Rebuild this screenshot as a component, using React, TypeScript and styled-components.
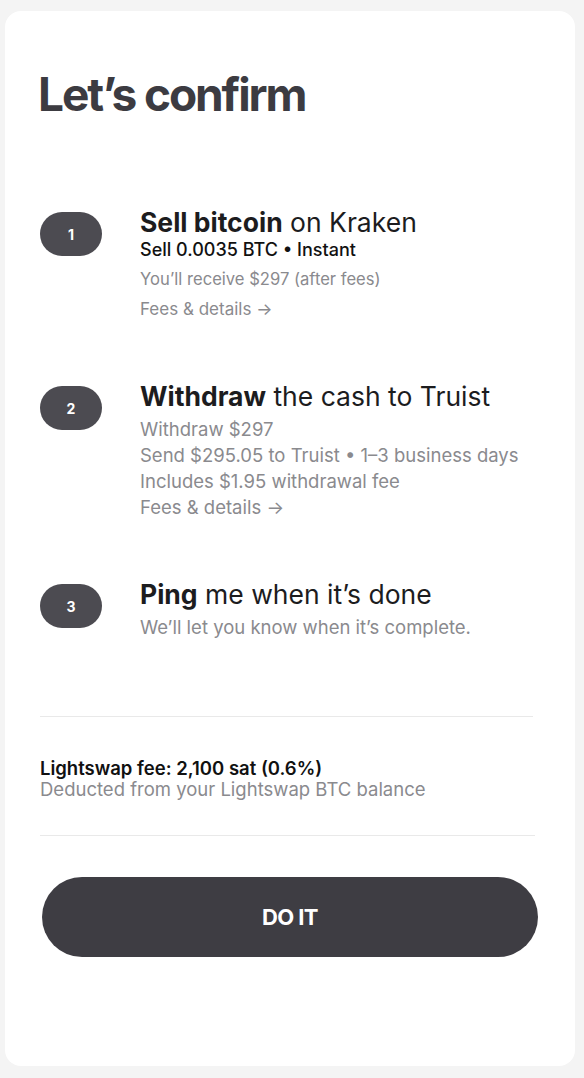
import React from "react";
import styled, { createGlobalStyle } from "styled-components";

const Global = createGlobalStyle`
  html, body { margin: 0; padding: 0; background: #f4f4f4; }
  body { font-family: Inter, "Noto Sans", "Liberation Sans", sans-serif; -webkit-font-smoothing: antialiased; }
  * { box-sizing: border-box; }
`;

const Page = styled.div`
  padding: 11px 9px 12px 5px;
  min-height: 1078px;
`;

const Card = styled.div`
  background: #ffffff;
  border-radius: 16px;
  height: 1055px;
  padding: 54px 35px 0 35px;
  display: flex;
  flex-direction: column;
`;

const Title = styled.h1`
  margin: 0 0 0 -2px;
  font-size: 46px;
  line-height: 58px;
  font-weight: 700;
  letter-spacing: -2.1px;
  color: #3c3b41;
`;

const Steps = styled.div`
  margin-top: 84px;
  display: flex;
  flex-direction: column;
  gap: 59px;
`;

const StepRow = styled.div`
  display: flex;
  align-items: flex-start;
  gap: 38px;
`;

const Badge = styled.div`
  flex: none;
  width: 62px;
  height: 44px;
  margin-top: 5px;
  border-radius: 22px;
  background: #4c4b51;
  color: #ffffff;
  font-size: 14px;
  font-weight: 700;
  display: flex;
  align-items: center;
  justify-content: center;
`;

const StepBody = styled.div`
  display: flex;
  flex-direction: column;
`;

const StepTitle = styled.div`
  font-size: 26.5px;
  line-height: 30px;
  font-weight: 400;
  color: #1c1c1e;
  white-space: nowrap;
  b { font-weight: 700; }
`;

const Strong = styled.div`
  margin-top: 2px;
  font-size: 18px;
  line-height: 22px;
  font-weight: 500;
  color: #111111;
`;

const Muted = styled.div<{ $gap?: number; $size?: number }>`
  margin-top: ${(p) => p.$gap ?? 0}px;
  font-size: ${(p) => p.$size ?? 18.5}px;
  line-height: 26px;
  color: #8a8a8e;
  white-space: nowrap;
`;

const Divider = styled.hr<{ $w: number; $top?: number }>`
  margin: ${(p) => p.$top ?? 0}px 0 0 0;
  border: none;
  height: 1px;
  background: #e9e9e9;
  width: ${(p) => p.$w}px;
`;

const FeeBlock = styled.div`
  padding: 40px 0 35px;
`;

const FeeTitle = styled.div`
  font-size: 18.5px;
  line-height: 22px;
  font-weight: 600;
  color: #111111;
`;

const FeeSub = styled.div`
  font-size: 18.5px;
  line-height: 21px;
  color: #8a8a8e;
`;

const Button = styled.button`
  margin: 41px 0 0 2px;
  width: 496px;
  height: 80px;
  border: none;
  border-radius: 40px;
  background: #3e3d43;
  color: #ffffff;
  font-family: inherit;
  font-size: 22px;
  font-weight: 700;
  letter-spacing: -0.6px;
  cursor: pointer;
`;

export default function App() {
  return (
    <>
      <Global />
      <Page>
        <Card>
          <Title>Let’s confirm</Title>
          <Steps>
            <StepRow>
              <Badge>1</Badge>
              <StepBody>
                <StepTitle>
                  <b>Sell bitcoin</b> on Kraken
                </StepTitle>
                <Strong>Sell 0.0035 BTC • Instant</Strong>
                <Muted $gap={5} $size={16.6}>You’ll receive $297 (after fees)</Muted>
                <Muted $gap={4} $size={17}>Fees &amp; details →</Muted>
              </StepBody>
            </StepRow>
            <StepRow>
              <Badge>2</Badge>
              <StepBody>
                <StepTitle>
                  <b>Withdraw</b> the cash to Truist
                </StepTitle>
                <Muted $gap={5}>Withdraw $297</Muted>
                <Muted>Send $295.05 to Truist • 1–3 business days</Muted>
                <Muted>Includes $1.95 withdrawal fee</Muted>
                <Muted>Fees &amp; details →</Muted>
              </StepBody>
            </StepRow>
            <StepRow>
              <Badge>3</Badge>
              <StepBody>
                <StepTitle>
                  <b>Ping</b> me when it’s done
                </StepTitle>
                <Muted $gap={5}>We’ll let you know when it’s complete.</Muted>
              </StepBody>
            </StepRow>
          </Steps>
          <Divider $w={493} $top={76} />
          <FeeBlock>
            <FeeTitle>Lightswap fee: 2,100 sat (0.6%)</FeeTitle>
            <FeeSub>Deducted from your Lightswap BTC balance</FeeSub>
          </FeeBlock>
          <Divider $w={495} />
          <Button>DO IT</Button>
        </Card>
      </Page>
    </>
  );
}
